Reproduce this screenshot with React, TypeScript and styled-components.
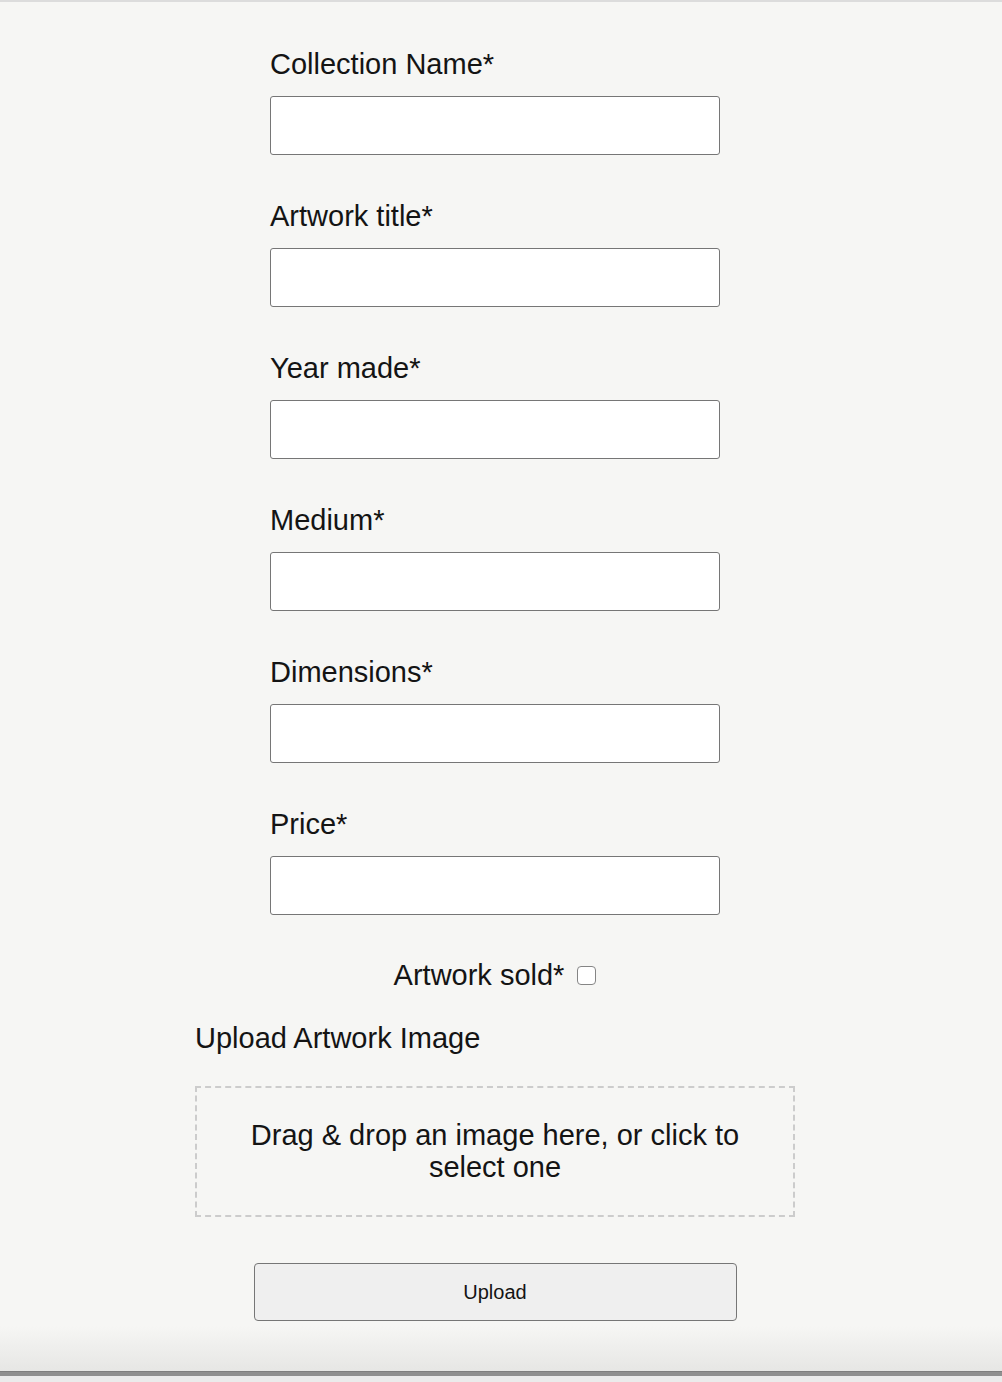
import React from "react";
import styled, { createGlobalStyle } from "styled-components";

const GlobalStyle = createGlobalStyle`
  html, body {
    margin: 0;
    padding: 0;
    background: #f6f6f4;
  }
  body {
    font-family: "Liberation Sans", Arial, Helvetica, sans-serif;
    color: #141414;
  }
  * { box-sizing: border-box; }
`;

const Page = styled.div`
  width: 1002px;
  min-height: 1382px;
  display: flex;
  flex-direction: column;
  background: #f6f6f4;
`;

const TopRule = styled.div`
  height: 2px;
  background: #dcdcdc;
`;

const Main = styled.main`
  width: 990px;
  display: flex;
  flex-direction: column;
  align-items: center;
  padding-top: 46px;
`;

const Form = styled.form`
  display: flex;
  flex-direction: column;
  align-items: center;
`;

const Fields = styled.div`
  width: 450px;
  display: flex;
  flex-direction: column;
  gap: 45px;
`;

const Field = styled.div`
  display: flex;
  flex-direction: column;
  gap: 15px;
`;

const Label = styled.label`
  font-size: 29px;
  line-height: 33px;
  color: #141414;
`;

const TextInput = styled.input`
  width: 450px;
  height: 59px;
  border: 1px solid #767676;
  border-radius: 3px;
  background: #ffffff;
  font-family: inherit;
  font-size: 20px;
  padding: 0 10px;
  outline: none;
`;

const CheckRow = styled.div`
  margin-top: 44px;
  display: flex;
  align-items: center;
  gap: 13px;
`;

const Check = styled.input`
  appearance: none;
  -webkit-appearance: none;
  margin: 0;
  width: 19px;
  height: 19px;
  border: 1px solid #858585;
  border-radius: 4px;
  background: #ffffff;
`;

const UploadSection = styled.section`
  width: 600px;
  margin-top: 30px;
  display: flex;
  flex-direction: column;
  gap: 31px;
`;

const DropZone = styled.div`
  width: 600px;
  border: 2px dashed #cccccc;
  padding: 31px 20px 32px;
  text-align: center;
  font-size: 29px;
  line-height: 32px;
  color: #141414;
  cursor: pointer;
`;

const UploadButton = styled.button`
  margin-top: 46px;
  width: 483px;
  height: 58px;
  background: #efefef;
  border: 1px solid #767676;
  border-radius: 4px;
  font-family: "Liberation Sans", Arial, Helvetica, sans-serif;
  font-size: 20px;
  color: #141414;
  cursor: pointer;
`;

const Spacer = styled.div`
  flex: 1;
  min-height: 1px;
`;

const BottomShade = styled.div`
  height: 50px;
  background: linear-gradient(to bottom, rgba(230, 230, 228, 0) 0%, #e6e6e4 100%);
  border-bottom: 4px solid #8f8f8f;
  box-shadow: inset 0 -1px 0 #7e7e7e;
`;

const BottomStrip = styled.div`
  height: 6px;
  background: #ebebeb;
`;

const fields = [
  { id: "collection", label: "Collection Name*" },
  { id: "title", label: "Artwork title*" },
  { id: "year", label: "Year made*" },
  { id: "medium", label: "Medium*" },
  { id: "dimensions", label: "Dimensions*" },
  { id: "price", label: "Price*" },
];

export default function App() {
  return (
    <>
      <GlobalStyle />
      <Page>
        <TopRule />
        <Main>
          <Form onSubmit={(e) => e.preventDefault()}>
            <Fields>
              {fields.map((f) => (
                <Field key={f.id}>
                  <Label htmlFor={f.id}>{f.label}</Label>
                  <TextInput id={f.id} type="text" />
                </Field>
              ))}
            </Fields>
            <CheckRow>
              <Label htmlFor="sold">Artwork sold*</Label>
              <Check id="sold" type="checkbox" />
            </CheckRow>
            <UploadSection>
              <Label>Upload Artwork Image</Label>
              <DropZone>Drag &amp; drop an image here, or click to select one</DropZone>
            </UploadSection>
            <UploadButton type="submit">Upload</UploadButton>
          </Form>
        </Main>
        <Spacer />
        <BottomShade />
        <BottomStrip />
      </Page>
    </>
  );
}
